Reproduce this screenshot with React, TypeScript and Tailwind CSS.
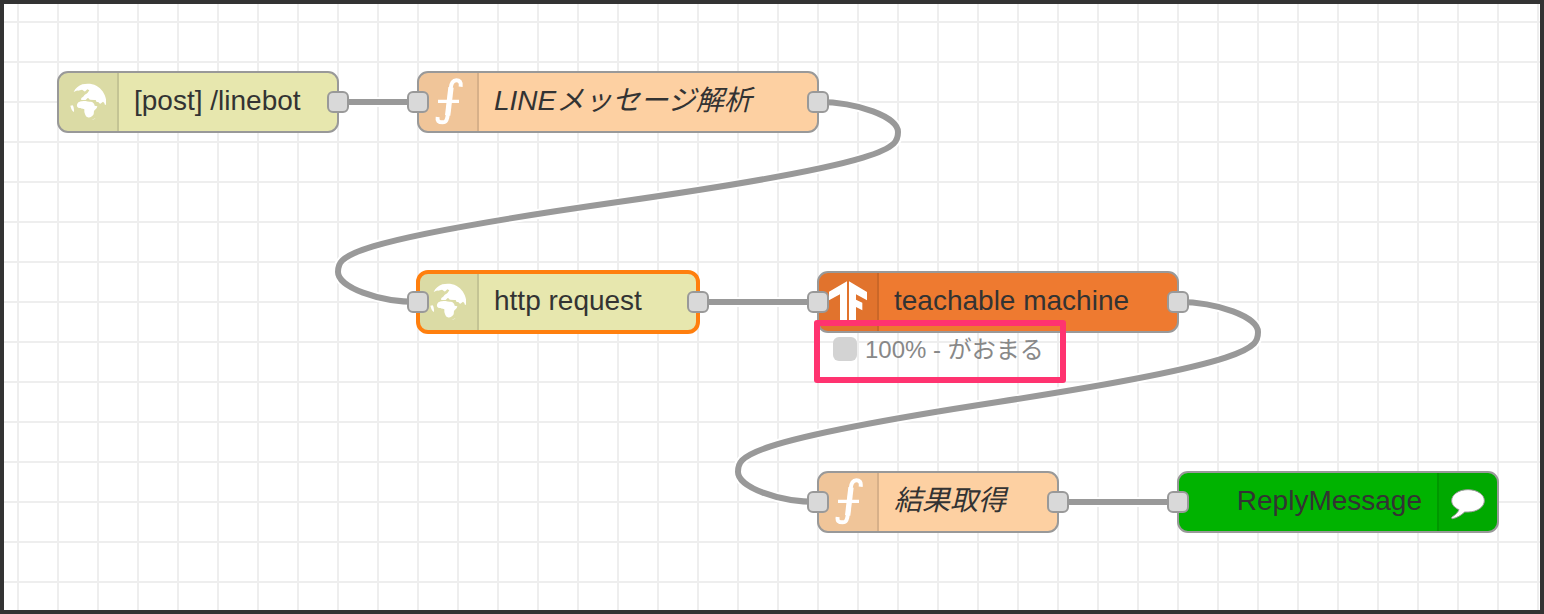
import React from "react";

type Icon = "globe" | "function" | "tensor" | "comment";

interface FlowNode {
  id: string;
  label: string;
  icon: Icon;
  box: string;
  fill: string;
  italic?: boolean;
  selected?: boolean;
  iconRight?: boolean;
  input?: boolean;
  output?: boolean;
}

interface Wire {
  from: [number, number];
  to: [number, number];
}

const nodes: FlowNode[] = [
  { id: "post", label: "[post] /linebot", icon: "globe", box: "left-[53px] top-[67px] w-[282px]", fill: "bg-[#e7e7ae]", output: true },
  { id: "parse", label: "LINEメッセージ解析", icon: "function", box: "left-[413px] top-[67px] w-[402px]", fill: "bg-[#fdd0a2]", italic: true, input: true, output: true },
  { id: "request", label: "http request", icon: "globe", box: "left-[413px] top-[267px] w-[282px]", fill: "bg-[#e7e7ae]", selected: true, input: true, output: true },
  { id: "teachable", label: "teachable machine", icon: "tensor", box: "left-[813px] top-[267px] w-[362px]", fill: "bg-[#ee7a30]", input: true, output: true },
  { id: "result", label: "結果取得", icon: "function", box: "left-[813px] top-[467px] w-[242px]", fill: "bg-[#fdd0a2]", italic: true, input: true, output: true },
  { id: "reply", label: "ReplyMessage", icon: "comment", box: "left-[1173px] top-[467px] w-[322px]", fill: "bg-[#00b300]", iconRight: true, input: true },
];

const wires: Wire[] = [
  { from: [334, 98], to: [414, 98] },
  { from: [814, 98], to: [414, 298] },
  { from: [694, 298], to: [814, 298] },
  { from: [1174, 298], to: [814, 498] },
  { from: [1054, 498], to: [1174, 498] },
];

function wirePath({ from: [x1, y1], to: [x2, y2] }: Wire): string {
  if (x2 > x1) return `M${x1} ${y1}L${x2} ${y2}`;
  const right = x1 + 80;
  const left = x2 - 80;
  const midX = (x1 + x2) / 2;
  const midY = (y1 + y2) / 2;
  return (
    `M${x1} ${y1}C${x1 + 40} ${y1} ${right} ${y1 + 15} ${right} ${y1 + 30}` +
    `S${right} ${y1 + 60} ${midX} ${midY}` +
    `S${left} ${y2 - 45} ${left} ${y2 - 30}` +
    `S${x2 - 40} ${y2} ${x2} ${y2}`
  );
}

function NodeIcon({ icon }: { icon: Icon }) {
  return (
    <svg aria-hidden="true" viewBox="0 0 174 174" className="h-[58px] w-[58px] shrink-0" fill="#fff">
      {icon === "globe" && (
        <g transform="translate(-27 -27)">
          <path d="M71 84C76 73 86 65 97 61C110 58 126 58 139 65C155 74 165 89 168 106L168 121C166 125 164 122 163 117L159 113L154 117C151 121 148 119 146 115L139 113C137 109 139 107 133 108L120 107C116 106 118 102 113 102L107 108L94 108C92 105 94 101 99 99L103 94C106 89 110 90 113 86L118 79L112 76L106 82C101 83 101 78 96 77L84 80C80 78 78 81 71 84Z" />
          <path d="M82 119C87 111 97 111 107 111C112 112 117 114 123 113C130 114 133 119 134 125L142 127C142 133 136 136 132 141L131 151C127 158 120 162 113 160C106 158 105 149 103 144L103 136C98 132 90 135 85 131C80 128 80 123 82 119Z" />
          <path d="M61 125L68 124C71 128 71 132 72 137L72 144C67 142 64 136 61 125Z" />
          <path d="M124 167C129 166 133 163 137 161C134 165 130 168 124 167Z" opacity="0.6" />
        </g>
      )}
      {icon === "function" && (
        <g transform="translate(-57 -27)" fill="none" stroke="#fff" strokeWidth="12">
          <path d="M182 68C184 53 178 49 169 49C156 49 153 61 152 75L144 148C142 166 139 175 128 175C115 175 111 170 113 159" />
          <path d="M153 70L143 154" strokeWidth="16" />
          <path d="M114 112H177" strokeWidth="10" />
        </g>
      )}
      {icon === "tensor" && (
        <g transform="translate(9 3)">
          <path d="M75 22V140H54V61L21 79V53Z" />
          <path d="M81 22L135 54V79L102 61V77L121 86V109L102 99V140H81Z" />
        </g>
      )}
      {icon === "comment" && (
        <path
          transform="translate(3 21)"
          d="M84 29C111 29 133 43 133 62C133 81 111 96 84 96L74 96C64 106 50 114 37 116C33 115 35 111 39 109C48 103 55 95 57 89C43 83 35 73 35 62C35 43 57 29 84 29Z"
          stroke="#999"
          strokeWidth="3"
        />
      )}
    </svg>
  );
}

function Port({ side }: { side: string }) {
  return <span className={`absolute top-[20px] h-[22px] w-[22px] rounded-[6px] border-2 border-[#999] bg-[#d9d9d9] ${side}`} />;
}

function NodeCard({ node }: { node: FlowNode }) {
  return (
    <div className={`absolute h-[62px] ${node.box}`}>
      <div
        className={`flex h-full overflow-hidden rounded-[11px] border-2 ${node.fill} ${
          node.selected ? "border-[#ff7f0e] outline-4 -outline-offset-3 outline-[#ff7f0e]" : "border-[#999]"
        } ${node.iconRight ? "flex-row-reverse" : ""}`}
      >
        <div
          className={`flex w-[60px] shrink-0 items-center justify-center bg-black/5 ${
            node.iconRight ? "border-l-2 border-black/10" : "border-r-2 border-black/10"
          }`}
        >
          <NodeIcon icon={node.icon} />
        </div>
        <span
          className={`flex-1 whitespace-nowrap px-[15px] text-[28px] leading-[56px] text-[#333] ${
            node.italic ? "italic" : ""
          } ${node.iconRight ? "text-right" : ""}`}
        >
          {node.label}
        </span>
      </div>
      {node.input && <Port side="-left-[10px]" />}
      {node.output && <Port side="-right-[10px]" />}
    </div>
  );
}

export default function App() {
  return (
    <main className="relative min-h-screen overflow-hidden border-4 border-[#333] bg-white bg-[linear-gradient(to_right,#eee_2px,transparent_2px),linear-gradient(to_bottom,#eee_2px,transparent_2px)] bg-[length:40px_40px] bg-[position:13px_17px] font-['Liberation_Sans','Noto_Sans_CJK_JP',sans-serif]">
      <svg aria-hidden="true" className="absolute inset-0 h-full w-full" fill="none">
        {wires.map((wire) => {
          const d = wirePath(wire);
          return (
            <g key={d}>
              <path d={d} stroke="#fff" strokeWidth="10" />
              <path d={d} stroke="#999" strokeWidth="6" />
            </g>
          );
        })}
      </svg>
      {nodes.map((node) => (
        <NodeCard key={node.id} node={node} />
      ))}
      <div className="absolute left-[810px] top-[316px] flex h-[63px] w-[252px] items-start gap-2 rounded-[3px] border-[6px] border-[#ff3370] pl-[13px]">
        <span className="mt-[11px] h-6 w-6 shrink-0 rounded-[6px] bg-[#d3d3d3]" />
        <span className="whitespace-nowrap text-[24px] leading-[48px] text-[#888]">100% - がおまる</span>
      </div>
    </main>
  );
}
